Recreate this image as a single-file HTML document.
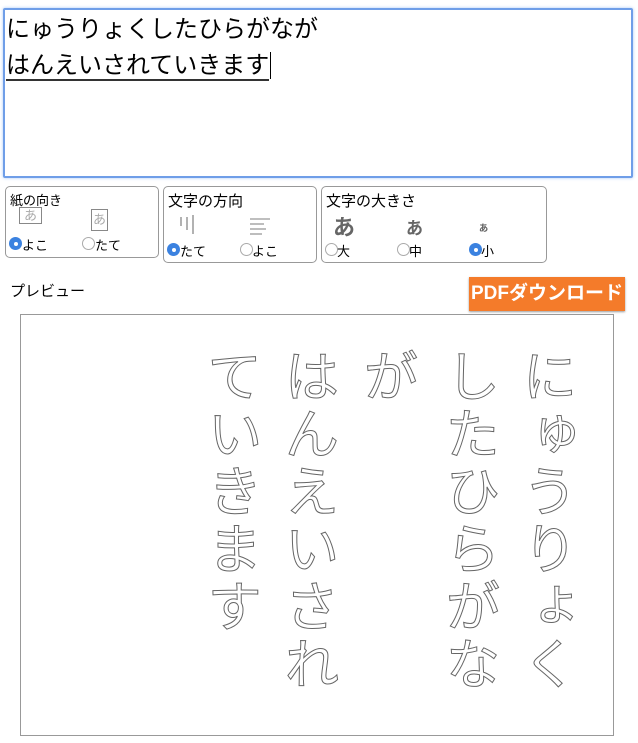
<!DOCTYPE html>
<html><head><meta charset="utf-8"><style>
body{margin:0;width:638px;height:743px;background:#fff;font-family:"Liberation Sans","Noto Sans CJK JP",sans-serif;position:relative;overflow:hidden;color:#000}
.ta{position:absolute;left:3px;top:8px;width:626px;height:166px;border:2px solid #6f9ee8;border-radius:2px;box-shadow:0 0 3px #a8c8f5}
.ta .t{position:absolute;left:1px;font-size:24px;line-height:36px;white-space:nowrap}
.fs{position:absolute;border:1px solid #999;border-radius:5px;font-size:13px}
.rad{position:absolute;width:13px;height:13px;border-radius:50%;box-sizing:border-box;border:1px solid #aaa;background:#fff}
.rad.on{background:#3b82e0;border:none}
.rad.on::after{content:"";position:absolute;left:4.5px;top:4.5px;width:4px;height:4px;border-radius:50%;background:#fff}
.lab{position:absolute;font-size:13px}
.col{position:absolute;writing-mode:vertical-rl;font-size:55px;line-height:60px;letter-spacing:2.5px;color:transparent;-webkit-text-stroke:1px #666;top:348px;white-space:nowrap}
</style></head><body>
<div class="ta"><div class="t" style="top:2px">にゅうりょくしたひらがなが</div><div class="t" style="top:38px"><span style="border-bottom:2px solid #333">はんえいされていきます</span><span style="border-left:1px solid #000;margin-left:1px"></span></div></div>

<div class="fs" style="left:5px;top:186px;width:152px;height:70px">
<div style="position:absolute;left:4px;top:3px">紙の向き</div>
<div style="position:absolute;left:13px;top:20px;width:21px;height:15px;border:1px solid #888;font-size:13px;color:#aaa;text-align:center;line-height:15px">あ</div>
<div style="position:absolute;left:85px;top:22px;width:15px;height:20px;border:1px solid #888;font-size:13px;color:#aaa;text-align:center;line-height:20px">あ</div>
<div class="rad on" style="left:3px;top:50px"></div><div class="lab" style="left:16px;top:48px">よこ</div>
<div class="rad" style="left:76px;top:50px"></div><div class="lab" style="left:89px;top:48px">たて</div>
</div>

<div class="fs" style="left:163px;top:186px;width:152px;height:75px">
<div style="position:absolute;left:4px;top:3px;font-size:15px">文字の方向</div>
<svg style="position:absolute;left:14px;top:28px" width="20" height="20"><g stroke="#999" stroke-width="1.5"><line x1="3" y1="2" x2="3" y2="11"/><line x1="9" y1="2" x2="9" y2="15"/><line x1="15" y1="0" x2="15" y2="19"/></g></svg>
<svg style="position:absolute;left:84px;top:30px" width="24" height="20"><g stroke="#999" stroke-width="1.3"><line x1="2" y1="2" x2="22" y2="2"/><line x1="2" y1="7" x2="16" y2="7"/><line x1="2" y1="12" x2="18" y2="12"/><line x1="2" y1="17" x2="14" y2="17"/></g></svg>
<div class="rad on" style="left:3px;top:56px"></div><div class="lab" style="left:16px;top:54px">たて</div>
<div class="rad" style="left:76px;top:56px"></div><div class="lab" style="left:88px;top:54px">よこ</div>
</div>

<div class="fs" style="left:321px;top:186px;width:224px;height:75px">
<div style="position:absolute;left:4px;top:3px;font-size:15px">文字の大きさ</div>
<div style="position:absolute;left:11px;top:23px;font-size:22px;font-weight:bold;color:#666">あ</div>
<div style="position:absolute;left:84px;top:27px;font-size:17px;font-weight:bold;color:#666">あ</div>
<div style="position:absolute;left:156px;top:32px;font-size:11px;font-weight:bold;color:#666">ぁ</div>
<div class="rad" style="left:3px;top:56px"></div><div class="lab" style="left:15px;top:54px">大</div>
<div class="rad" style="left:75px;top:56px"></div><div class="lab" style="left:87px;top:54px">中</div>
<div class="rad on" style="left:147px;top:56px"></div><div class="lab" style="left:159px;top:54px">小</div>
</div>

<div style="position:absolute;left:10px;top:280px;font-size:15px">プレビュー</div>
<div style="position:absolute;left:469px;top:277px;width:156px;height:34px;background:#f47b2a;color:#fff;font-size:19px;font-weight:bold;line-height:34px;text-align:center;box-shadow:0 1px 2px #999;white-space:nowrap">PDFダウンロード</div>

<div style="position:absolute;left:20px;top:314px;width:592px;height:420px;border:1px solid #999"></div>
<div class="col" style="left:515px">にゅうりょく</div>
<div class="col" style="left:438px">したひらがな</div>
<div class="col" style="left:356px">が</div>
<div class="col" style="left:277px">はんえいされ</div>
<div class="col" style="left:200px">ていきます</div>
</body></html>
